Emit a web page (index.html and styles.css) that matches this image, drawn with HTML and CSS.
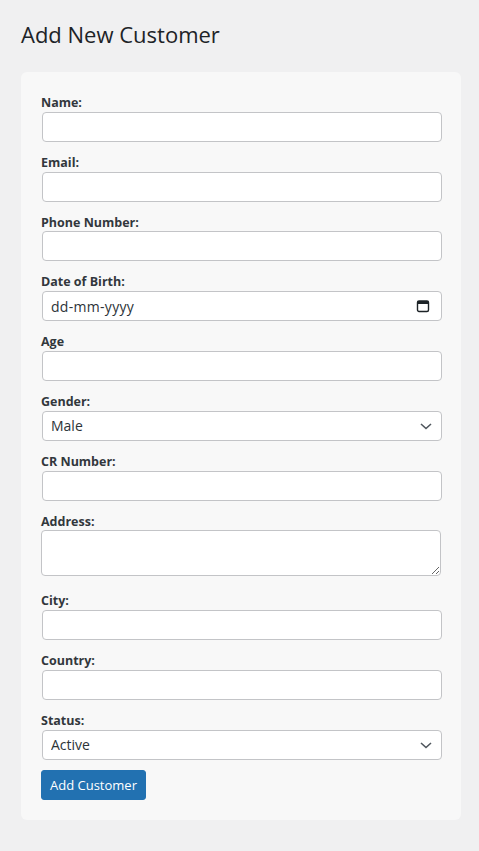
FILE: index.html
```html
<!DOCTYPE html>
<html lang="en">
<head>
<meta charset="utf-8">
<title>Add New Customer</title>
<link rel="stylesheet" href="styles.css">
</head>
<body>
<div class="wrap">
  <h1 class="title">Add New Customer</h1>
  <form class="card">
    <div class="field">
      <label class="label" for="name">Name:</label>
      <input class="control" id="name" type="text">
    </div>
    <div class="field">
      <label class="label" for="email">Email:</label>
      <input class="control" id="email" type="text">
    </div>
    <div class="field">
      <label class="label" for="phone">Phone Number:</label>
      <input class="control" id="phone" type="text">
    </div>
    <div class="field">
      <label class="label" for="dob">Date of Birth:</label>
      <div class="date-wrap">
        <input class="control date" id="dob" type="text" placeholder="dd-mm-yyyy">
        <svg class="cal-icon" width="14" height="14" viewBox="0 0 14 14" aria-hidden="true">
          <rect x="1.5" y="2" width="11" height="10.5" rx="1.5" fill="none" stroke="#1d2327" stroke-width="1.4"/>
          <rect x="1.5" y="2" width="11" height="3" fill="#1d2327"/>
        </svg>
      </div>
    </div>
    <div class="field">
      <label class="label" for="age">Age</label>
      <input class="control" id="age" type="text">
    </div>
    <div class="field">
      <label class="label" for="gender">Gender:</label>
      <select class="control select" id="gender">
        <option>Male</option>
        <option>Female</option>
      </select>
    </div>
    <div class="field">
      <label class="label" for="cr">CR Number:</label>
      <input class="control" id="cr" type="text">
    </div>
    <div class="field field-area">
      <label class="label" for="address">Address:</label>
      <textarea class="control textarea" id="address"></textarea>
    </div>
    <div class="field">
      <label class="label" for="city">City:</label>
      <input class="control" id="city" type="text">
    </div>
    <div class="field">
      <label class="label" for="country">Country:</label>
      <input class="control" id="country" type="text">
    </div>
    <div class="field">
      <label class="label" for="status">Status:</label>
      <select class="control select" id="status">
        <option>Active</option>
        <option>Inactive</option>
      </select>
    </div>
    <button class="btn" type="button">Add Customer</button>
  </form>
</div>
</body>
</html>
```
FILE: styles.css
```css
* { box-sizing: border-box; }
html, body {
  margin: 0;
  padding: 0;
  background: #f0f0f1;
  font-family: "Open Sans", "Noto Sans", "Liberation Sans", sans-serif;
  color: #3c434a;
}
.wrap {
  padding: 20px 18px 31px 21px;
}
.title {
  margin: 0 0 24px 0;
  font-size: 22px;
  font-weight: 400;
  line-height: 28px;
  color: #1d2327;
}
.card {
  width: 440px;
  background: #f8f8f8;
  border-radius: 6px;
  padding: 20px 19px 20px 20px;
}
.field {
  display: flex;
  flex-direction: column;
  margin-bottom: 10px;
}
.field-area { margin-bottom: 14px; }
.label {
  display: block;
  font-size: 12.5px;
  font-weight: 700;
  line-height: 17.8px;
  margin: 2px 0 0 0;
  color: #32373c;
}
.control {
  display: block;
  width: 400px;
  height: 30px;
  margin-left: 1px;
  border: 1px solid #c3c4c7;
  border-radius: 4px;
  background: #fff;
  padding: 0 8px;
  font-family: inherit;
  font-size: 14px;
  color: #2c3338;
  outline: none;
}
.date-wrap {
  position: relative;
  width: 401px;
}
.date::placeholder {
  color: #2c3338;
  opacity: 1;
  letter-spacing: 0.3px;
}
.cal-icon {
  position: absolute;
  right: 12px;
  top: 8px;
}
.select {
  appearance: none;
  -webkit-appearance: none;
  padding: 0 24px 0 8px;
  background-image: url("data:image/svg+xml;utf8,<svg xmlns='http://www.w3.org/2000/svg' width='20' height='20' viewBox='0 0 20 20'><path d='M5 8l5 4.5L15 8' fill='none' stroke='%2350575e' stroke-width='1.6'/></svg>");
  background-repeat: no-repeat;
  background-position: right 5px center;
  background-size: 20px 20px;
}
.textarea {
  height: 46px;
  width: 400px;
  margin-left: 0;
  resize: vertical;
  padding: 4px 8px;
}
.btn {
  display: block;
  margin-left: 0;
  height: 30px;
  padding: 0 8px;
  background: #2271b1;
  border: 1px solid #2271b1;
  border-radius: 3px;
  color: #fff;
  font-family: inherit;
  font-size: 13px;
  line-height: 28px;
  cursor: pointer;
}
```
